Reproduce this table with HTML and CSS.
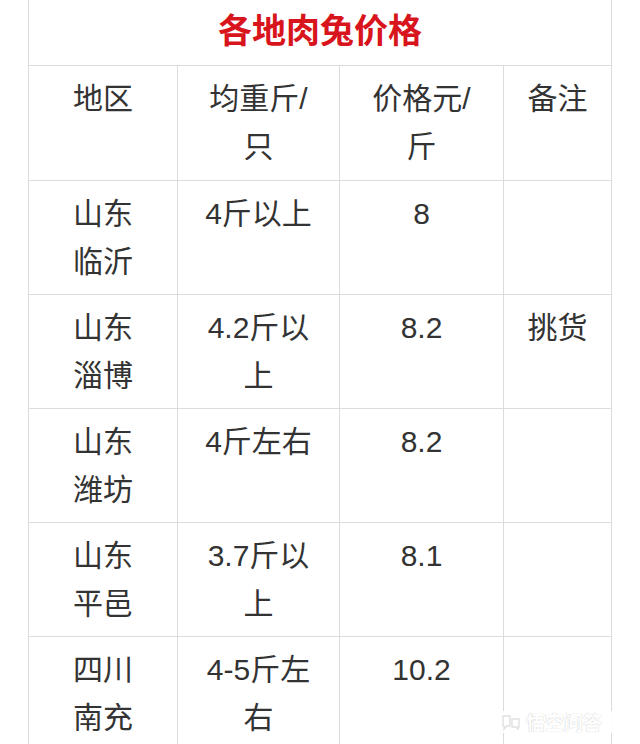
FILE: index.html
```html
<!DOCTYPE html>
<html lang="zh-CN">
<head>
<meta charset="utf-8">
<title>各地肉兔价格</title>
<link rel="stylesheet" href="styles.css">
</head>
<body>
<div class="page">
  <table class="price-table">
    <colgroup>
      <col class="c1"><col class="c2"><col class="c3"><col class="c4">
    </colgroup>
    <tr><td class="title" colspan="4">各地肉兔价格</td></tr>
    <tr class="head"><td>地区</td><td>均重斤/<br>只</td><td>价格元/<br>斤</td><td>备注</td></tr>
    <tr><td>山东<br>临沂</td><td>4斤以上</td><td>8</td><td></td></tr>
    <tr><td>山东<br>淄博</td><td>4.2斤以<br>上</td><td>8.2</td><td>挑货</td></tr>
    <tr><td>山东<br>潍坊</td><td>4斤左右</td><td>8.2</td><td></td></tr>
    <tr><td>山东<br>平邑</td><td>3.7斤以<br>上</td><td>8.1</td><td></td></tr>
    <tr><td>四川<br>南充</td><td>4-5斤左<br>右</td><td>10.2</td><td></td></tr>
  </table>
  <div class="watermark">
    <svg class="wm-icon" width="22" height="18" viewBox="0 0 22 18"><path d="M3 3h7v10H7l-3 3v-3H3z" fill="none" stroke="#e0e0e0" stroke-width="1.4"/><path d="M12 6h7v8h-1v2l-2-2h-4z" fill="none" stroke="#e0e0e0" stroke-width="1.4"/></svg>
    <span class="wm-text">悟空问答</span>
  </div>
</div>
</body>
</html>
```

FILE: styles.css
```css
html, body {
  margin: 0;
  padding: 0;
  background: #ffffff;
}
.page {
  position: relative;
  width: 640px;
  height: 744px;
  overflow: hidden;
  padding-left: 28px;
  box-sizing: border-box;
}
.price-table {
  border-collapse: collapse;
  table-layout: fixed;
  width: 584px;
  font-family: "Liberation Sans", "Noto Sans CJK SC", sans-serif;
  color: #333333;
  font-size: 30px;
  line-height: 48px;
}
.c1 { width: 149px; }
.c2 { width: 162px; }
.c3 { width: 164px; }
.c4 { width: 108px; }
.price-table td {
  border: 1px solid #dcdcdc;
  text-align: center;
  vertical-align: top;
  padding: 9px 0 8px;
  height: 96px;
}
.price-table .head td {
  padding: 9px 0 9px;
}
.price-table td.title {
  border-top: none;
  height: 58px;
  padding: 0 0 7px;
  line-height: 58px;
  font-family: "Noto Sans CJK SC", sans-serif;
  font-size: 34px;
  font-weight: bold;
  color: #d8141c;
  vertical-align: middle;
}
.watermark {
  position: absolute;
  left: 500px;
  top: 711px;
  width: 132px;
  height: 22px;
  display: flex;
  align-items: center;
  gap: 4px;
  background: rgba(255, 255, 255, 0.92);
}
.wm-text {
  font-family: "Noto Sans CJK SC", sans-serif;
  font-size: 19px;
  line-height: 22px;
  color: #ffffff;
  font-weight: bold;
  text-shadow: 0 0 1px #d0d0d0, 0 0 1px #d0d0d0;
}
```
